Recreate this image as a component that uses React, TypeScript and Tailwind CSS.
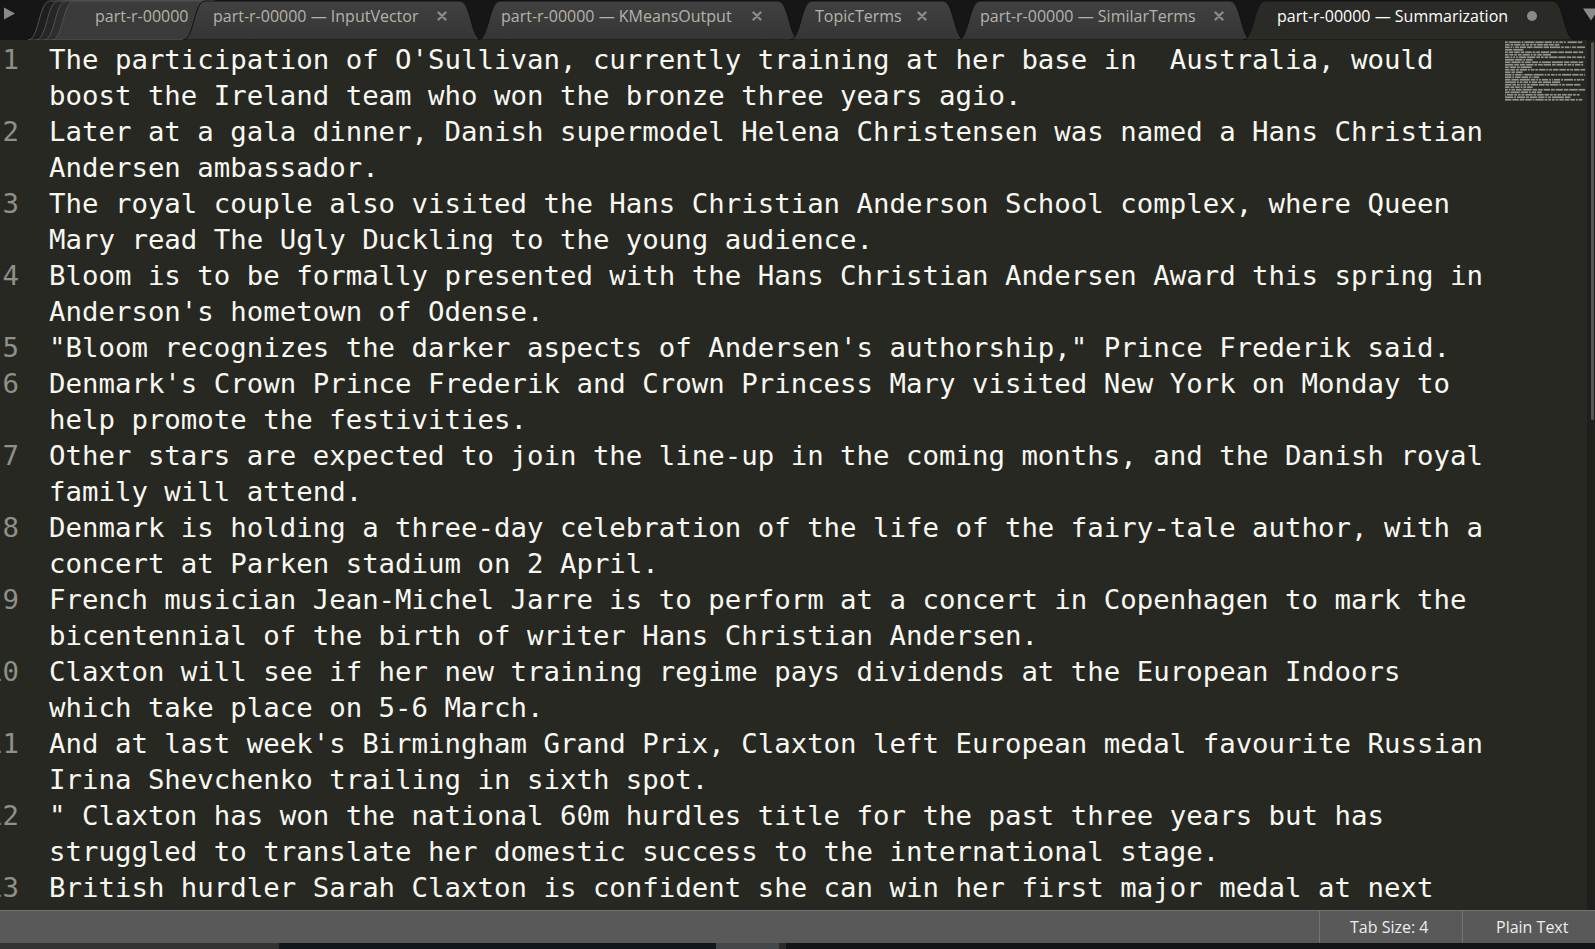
import React from "react";

const ROWS: [string, string][] = [
  ["1", "The participation of O'Sullivan, currently training at her base in  Australia, would"],
  ["", "boost the Ireland team who won the bronze three years agio."],
  ["2", "Later at a gala dinner, Danish supermodel Helena Christensen was named a Hans Christian"],
  ["", "Andersen ambassador."],
  ["3", "The royal couple also visited the Hans Christian Anderson School complex, where Queen"],
  ["", "Mary read The Ugly Duckling to the young audience."],
  ["4", "Bloom is to be formally presented with the Hans Christian Andersen Award this spring in"],
  ["", "Anderson's hometown of Odense."],
  ["5", "\"Bloom recognizes the darker aspects of Andersen's authorship,\" Prince Frederik said."],
  ["6", "Denmark's Crown Prince Frederik and Crown Princess Mary visited New York on Monday to"],
  ["", "help promote the festivities."],
  ["7", "Other stars are expected to join the line-up in the coming months, and the Danish royal"],
  ["", "family will attend."],
  ["8", "Denmark is holding a three-day celebration of the life of the fairy-tale author, with a"],
  ["", "concert at Parken stadium on 2 April."],
  ["9", "French musician Jean-Michel Jarre is to perform at a concert in Copenhagen to mark the"],
  ["", "bicentennial of the birth of writer Hans Christian Andersen."],
  ["10", "Claxton will see if her new training regime pays dividends at the European Indoors"],
  ["", "which take place on 5-6 March."],
  ["11", "And at last week's Birmingham Grand Prix, Claxton left European medal favourite Russian"],
  ["", "Irina Shevchenko trailing in sixth spot."],
  ["12", "\" Claxton has won the national 60m hurdles title for the past three years but has"],
  ["", "struggled to translate her domestic success to the international stage."],
  ["13", "British hurdler Sarah Claxton is confident she can win her first major medal at next"],
];

const shape = (w: number, x0 = 0, h = 40) =>
  `M${x0},${h} C${x0 + 11},${h} ${x0 + 11},1 ${x0 + 22},1 L${x0 + w - 22},1 C${x0 + w - 11},1 ${x0 + w - 11},${h} ${x0 + w},${h} Z`;

function CloseX() {
  return (
    <svg width="10" height="10" viewBox="0 0 10 10" className="shrink-0">
      <path d="M1.5 1.5 L8.5 8.5 M8.5 1.5 L1.5 8.5" stroke="#8a8a86" strokeWidth="2.4" strokeLinecap="round" />
    </svg>
  );
}

type TabProps = {
  w: number;
  cls: string;
  label: string;
  active?: boolean;
};

function Tab({ w, cls, label, active }: TabProps) {
  return (
    <div className={`relative h-[40px] shrink-0 ${cls}`}>
      <svg className="absolute left-0 top-0" width={w} height={40}>
        <defs>
          <linearGradient id="inact" x1="0" y1="0" x2="0" y2="1">
            <stop offset="0" stopColor="#414141" />
            <stop offset="1" stopColor="#353535" />
          </linearGradient>
        </defs>
        <path d={shape(w)} fill={active ? "#2a2a26" : "url(#inact)"} stroke="#121212" strokeWidth="1" />
      </svg>
      <div className="relative flex items-center h-[32px] w-full">
        <span className={`whitespace-pre ${active ? "text-white" : "text-[#b5b3aa]"}`}>{label}</span>
        <span className="ml-auto flex items-center">
          {active ? <span className="block w-[10px] h-[10px] rounded-full bg-[#8a8a86]" /> : <CloseX />}
        </span>
      </div>
    </div>
  );
}

function TabBar() {
  return (
    <div className="relative h-[40px] shrink-0 bg-[#161616] flex font-['Open_Sans',sans-serif] text-[16px] overflow-hidden">
      <div className="w-[28px] shrink-0 flex items-start pt-[7px] pl-[3px]">
        <svg width="13" height="13" viewBox="0 0 13 13">
          <path d="M1 0.5 L12 6.5 L1 12.5 Z" fill="#8a8a8a" />
        </svg>
      </div>
      <div className="relative h-[40px] w-[187px] shrink-0">
        <svg className="absolute left-0 top-0" width={187} height={40}>
          {[0, 1, 2, 3].map((i) => (
            <path
              key={i}
              d={shape(187 - i * 8 + 30, i * 8)}
              fill={["#1e1e1e", "#262626", "#2e2e2e", "#3b3b3b"][i]}
              stroke="#525252"
              strokeWidth="1"
            />
          ))}
        </svg>
        <div className="relative flex items-center h-[32px] pl-[67px]">
          <span className="whitespace-pre text-[#b5b3aa]">part-r-00000</span>
        </div>
      </div>
      <Tab w={299} cls="w-[299px] -ml-[32px] pl-[30px] pr-[35px]" label="part-r-00000 — InputVector" />
      <Tab w={322} cls="w-[322px] -ml-[4px] pl-[23px] pr-[38px]" label="part-r-00000 — KMeansOutput" />
      <Tab w={175} cls="w-[175px] -ml-[10px] pl-[25px] pr-[38px]" label="TopicTerms" />
      <Tab w={294} cls="w-[294px] -ml-[7px] pl-[22px] pr-[28px]" label="part-r-00000 — SimilarTerms" />
      <Tab w={332} cls="w-[332px] -ml-[9px] pl-[34px] pr-[38px]" label="part-r-00000 — Summarization" active />
      <div className="flex-1 flex justify-end items-start pt-[8px]">
        <svg width="12" height="13" viewBox="0 0 12 13">
          <path d="M0 0.5 L16 0.5 L8 12.5 Z" fill="#8a8a8a" />
        </svg>
      </div>
    </div>
  );
}

function Minimap() {
  const rects: React.ReactNode[] = [];
  ROWS.forEach(([, t], r) => {
    const re = /\S+/g;
    let m: RegExpExecArray | null;
    while ((m = re.exec(t)) !== null) {
      rects.push(
        <rect key={`${r}-${m.index}`} x={m.index * 0.92} y={r * 2.5 + 0.4} width={m[0].length * 0.92} height={1.7} fill="#94948e" />
      );
    }
  });
  return (
    <svg width="82" height="62" viewBox="0 0 82 62">
      {rects}
    </svg>
  );
}

export default function App() {
  return (
    <div className="w-[1595px] h-[949px] overflow-hidden flex flex-col bg-[#272822]">
      <TabBar />
      <div className="flex h-[870px] shrink-0">
        <div className="w-[1505px] shrink-0 overflow-hidden pt-[2px] font-['DejaVu_Sans_Mono',monospace] text-[27.39px] leading-[36px] text-[#f8f8f2]">
          {ROWS.map(([n, t], i) => (
            <div key={i} className="flex h-[36px]">
              <div className="w-[19px] shrink-0 overflow-hidden flex justify-end text-[#8f908a]">
                <span className="whitespace-pre shrink-0">{n}</span>
              </div>
              <div className="ml-[30px] whitespace-pre">{t}</div>
            </div>
          ))}
        </div>
        <div className="w-[82px] shrink-0 pt-[1px]">
          <Minimap />
        </div>
        <div className="w-[8px] shrink-0 bg-[#1e1f1b] flex justify-end pt-[2px]">
          <div className="w-[3px] h-[378px] bg-[#565656] rounded-full mr-[1px]" />
        </div>
      </div>
      <div className="h-[33px] shrink-0 border-t border-[#727272] bg-[#595959] flex justify-end font-['Open_Sans',sans-serif] text-[16px] text-[#ededed]">
        <div className="w-[143px] border-l border-[#747474] flex items-center pl-[30px] whitespace-pre">Tab Size: 4</div>
        <div className="w-[133px] border-l border-[#747474] flex items-center pl-[33px] whitespace-pre">Plain Text</div>
      </div>
      <div className="h-[6px] shrink-0 flex">
        <div className="w-[279px] bg-[#333333]" />
        <div className="w-[437px] bg-[#11171b]" />
        <div className="w-[63px] bg-[#45484a]" />
        <div className="w-[7px] bg-[#2a2a2a]" />
        <div className="flex-1 bg-[#121416]" />
      </div>
    </div>
  );
}
